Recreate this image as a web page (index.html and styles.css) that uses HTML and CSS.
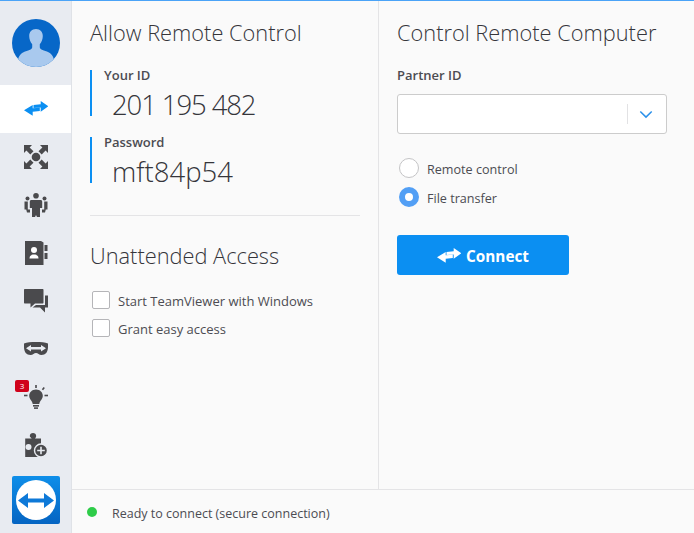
FILE: index.html
```html
<!DOCTYPE html>
<html lang="en">
<head>
<meta charset="utf-8">
<title>TeamViewer</title>
<link rel="stylesheet" href="styles.css">
</head>
<body>
<div class="app">
  <nav class="sidebar">
    <div class="avatar-wrap">
      <svg class="avatar" viewBox="0 0 48 48"><defs><clipPath id="av"><circle cx="24" cy="24" r="24"/></clipPath></defs><circle cx="24" cy="24" r="24" fill="#0767c8"/><g clip-path="url(#av)"><path d="M24 10c-4.300 0-6.800 3-6.800 7 0 3.200 1.200 6.200 3 8.200v3.300c0 1.500-2.500 2.500-5.500 3.500C10 33.500 7 35.500 6 41v7h36v-7c-1-5.500-4-7.500-8.700-9-3-1-5.500-2-5.500-3.500v-3.300c1.800-2 3-5 3-8.200 0-4-2.500-7-6.800-7z" fill="#a9c9ee"/></g></svg>
    </div>
    <a class="nav-item active">
      <svg class="ico" viewBox="0 0 24 24"><path fill="#0b8ff2" d="M16.700 4 24.300 9.300 16.700 14.700V10.400L9.500 11V8L16.700 7.200zM8.700 8V11.300L15.800 10.700V14L8.700 14.700V18.700L0 13.300z"/></svg>
    </a>
    <a class="nav-item">
      <svg class="ico" viewBox="0 0 24 24" fill="#4a4a4d"><circle cx="12" cy="12" r="4.300"/><path d="M0 0h8L5.600 2.400 9.500 6.300 6.300 9.500 2.400 5.600 0 8zM24 0v8l-2.400-2.400-3.900 3.900-3.200-3.200 3.900-3.900L16 0zM0 24v-8l2.400 2.400 3.900-3.900 3.200 3.200-3.900 3.900L8 24zM24 24h-8l2.400-2.400-3.900-3.900 3.200-3.200 3.900 3.900L24 16z"/></svg>
    </a>
    <a class="nav-item">
      <svg class="ico" viewBox="0 0 24 24" fill="#4a4a4d"><circle cx="12" cy="2.800" r="2.800"/><circle cx="3.500" cy="5.500" r="2"/><circle cx="20.500" cy="5.500" r="2"/><path d="M7.500 7h9c1 0 1.700.7 1.700 1.700V15H16v9h-3l-1-2-1 2H8v-9H5.800V8.700C5.800 7.700 6.500 7 7.500 7z"/><path d="M.5 8.500h3.300v8H6v3H3l-.8-3H.5zM23.500 8.500h-3.300v8H18v3h3l.8-3h1.700z"/></svg>
    </a>
    <a class="nav-item">
      <svg class="ico" viewBox="0 0 24 24"><path fill="#4a4a4d" d="M1 0h16l2.500 1.500V24H1z"/><rect x="20.500" y="4" width="3" height="6" fill="#4a4a4d"/><rect x="20.500" y="12" width="3" height="6" fill="#4a4a4d"/><circle cx="10" cy="9" r="3" fill="#fff"/><path fill="#fff" d="M5.500 17.500c0-3 2-4 4.500-4s4.500 1 4.500 4z"/></svg>
    </a>
    <a class="nav-item">
      <svg class="ico" viewBox="0 0 24 24" fill="#4a4a4d"><path d="M1 0h17.500c.6 0 1 .4 1 1v12.500c0 .6-.4 1-1 1H11l-4.500 4v-4H1c-.6 0-1-.4-1-1V1c0-.6.4-1 1-1z"/><path d="M21 6.500h3v12h-3v5l-5-5H8.500l3.500-2.500h9z"/></svg>
    </a>
    <a class="nav-item">
      <svg class="ico" viewBox="0 0 24 24"><path fill="#4a4a4d" d="M0 6.500C3 5.300 7 5 12 5s9 .3 12 1.500v3.500c0 5-2.500 8-6.500 8-2.500 0-3.500-2-5.500-2s-3 2-5.500 2C2.500 18 0 15 0 10z"/><path fill="#e8ebf1" d="M7 8v2h10V8l5 3.200-5 3.300v-2H7v2l-5-3.300z"/></svg>
    </a>
    <a class="nav-item">
      <svg class="ico" viewBox="0 0 24 24"><g fill="#4a4a4d"><path d="M12 4.500c4 0 6.800 3 6.800 6.300 0 3.500-3 5-3.500 8.200H8.700c-.5-3.200-3.500-4.700-3.500-8.200 0-3.300 2.800-6.300 6.800-6.300z"/><rect x="9" y="20" width="6" height="1.600"/><rect x="10" y="22.300" width="4" height="1.600"/><rect x="11.200" y="0" width="1.600" height="3"/><rect x="0" y="9.700" width="3.500" height="1.600"/><rect x="20.500" y="9.700" width="3.500" height="1.600"/><path d="m17.800 4.200 1.800-2.300 1.300 1-1.800 2.300z"/></g></svg>
      <span class="badge">3</span>
    </a>
    <a class="nav-item">
      <svg class="ico" viewBox="0 0 24 24"><path fill="#4a4a4d" d="M9 0c1.800 0 3.200 1.300 3.200 3 0 1-.4 1.700-1.200 2.500h6V24H1.200V5.500h6.600C7 4.700 5.800 4 5.800 3 5.800 1.300 7.200 0 9 0z"/><circle cx="4.500" cy="14" r="3" fill="#e8ebf1"/><circle cx="17" cy="17.500" r="6.500" fill="#4a4a4d" stroke="#e8ebf1" stroke-width="1.400"/><path fill="#e8ebf1" d="M16.200 13.800h1.600v3h3v1.500h-3v3h-1.600v-3h-3v-1.500h3z"/></svg>
    </a>
    <div class="logo-wrap">
      <svg class="logo" viewBox="0 0 48 48"><defs><linearGradient id="lg" x1="0" y1="0" x2="0" y2="1"><stop offset="0" stop-color="#0e8ee9"/><stop offset="1" stop-color="#0564c2"/></linearGradient></defs><rect width="48" height="48" rx="2" fill="url(#lg)"/><circle cx="24" cy="24" r="20" fill="#fff"/><path fill="#0e79d8" d="M6 24.500 16 17v5.500h16V17l10 7.500L32 32v-5.500H16V32z"/></svg>
    </div>
  </nav>
  <div class="main">
    <div class="columns">
      <section class="col col-left">
        <h1 class="title">Allow Remote Control</h1>
        <div class="cred">
          <div class="cred-label">Your ID</div>
          <div class="cred-value id">201 195 482</div>
        </div>
        <div class="cred">
          <div class="cred-label">Password</div>
          <div class="cred-value">mft84p54</div>
        </div>
        <hr class="rule">
        <h1 class="title">Unattended Access</h1>
        <div class="checks">
          <label class="check"><span class="box"></span><span class="opt-text">Start TeamViewer with Windows</span></label>
          <label class="check"><span class="box"></span><span class="opt-text">Grant easy access</span></label>
        </div>
      </section>
      <section class="col col-right">
        <h1 class="title">Control Remote Computer</h1>
        <div class="cred-label partner">Partner ID</div>
        <div class="combo">
          <span class="combo-sep"></span>
          <svg class="chev" viewBox="0 0 16 10"><path d="M1.500 1.500 8 8l6.500-6.500" fill="none" stroke="#2a90ea" stroke-width="1.700"/></svg>
        </div>
        <div class="radios">
          <label class="radio"><span class="dot"></span><span class="opt-text">Remote control</span></label>
          <label class="radio"><span class="dot on"></span><span class="opt-text">File transfer</span></label>
        </div>
        <button class="connect">
          <svg class="connect-ico" viewBox="0 3 24 17"><path fill="#fff" d="M16.700 4 24.300 9.300 16.700 14.700V10.400L9.500 11V8L16.700 7.200zM8.700 8V11.300L15.800 10.700V14L8.700 14.700V18.700L0 13.300z"/></svg>
          Connect
        </button>
      </section>
    </div>
    <footer class="status"><span class="led"></span>Ready to connect (secure connection)</footer>
  </div>
</div>
</body>
</html>
```
FILE: styles.css
```css
* { box-sizing: border-box; }
html, body { margin: 0; height: 100%; }
body { font-family: "Open Sans", "Noto Sans", sans-serif; color: #3f3f44; background: #fafafa; overflow: hidden; }
.app { display: flex; width: 694px; height: 533px; border-top: 1px solid #4aa3f7; }
.sidebar { width: 72px; flex: none; background: #e8ebf1; border-right: 1px solid #dfe2e7; display: flex; flex-direction: column; }
.avatar-wrap { height: 84px; padding: 18px 0 0 12px; }
.avatar { display: block; width: 48px; height: 48px; }
.nav-item { position: relative; height: 48px; display: flex; align-items: center; justify-content: center; }
.nav-item.active { background: #fff; }
.ico { display: block; width: 24px; height: 24px; }
.badge { position: absolute; left: 15px; top: 7px; width: 14px; height: 12px; border-radius: 2px; background: #d0021b; color: #fff; font-size: 8px; line-height: 12px; text-align: center; }
.logo-wrap { padding: 7px 0 0 12px; }
.logo { display: block; width: 48px; height: 48px; }
.main { flex: 1; display: flex; flex-direction: column; min-width: 0; }
.columns { display: flex; flex: 1; min-height: 0; }
.col { padding-top: 17px; }
.col-left { width: 307px; border-right: 1px solid #e4e4e6; padding-left: 18px; padding-right: 18px; }
.col-right { flex: 1; padding-left: 18px; padding-right: 27px; }
.title { margin: 0; font-size: 21.800px; font-weight: 300; line-height: 30px; color: #35353a; white-space: nowrap; }
.cred { margin-top: 22px; height: 46px; border-left: 2px solid #0b8ff2; padding-left: 12px; }
.cred + .cred { margin-top: 21px; }
.cred-label { font-size: 13px; font-weight: 600; line-height: 11px; color: #4c4c52; }
.cred-value { font-size: 27.500px; font-weight: 300; line-height: 36px; margin: 6px 0 0 8px; color: #35353a; white-space: nowrap; }
.cred-value.id { letter-spacing: -1.100px; }
.rule { margin: 32px 0 0; border: 0; border-top: 1px solid #e4e4e6; }
.rule + .title { margin-top: 25px; }
.checks { margin-top: 20px; display: flex; flex-direction: column; gap: 10px; }
.check { display: flex; align-items: center; gap: 8px; height: 18px; padding-left: 2px; font-size: 13px; color: #4c4c52; white-space: nowrap; }
.opt-text { padding-top: 2px; }
.box { width: 18px; height: 18px; border: 1px solid #b5b5b8; border-radius: 2px; background: #fff; flex: none; }
.partner { margin-top: 22px; }
.combo { margin-top: 13px; height: 40px; border: 1px solid #ccc; border-radius: 3px; background: #fff; display: flex; align-items: center; justify-content: flex-end; padding-right: 13px; }
.combo-sep { width: 1px; height: 20px; background: #e2e2e4; margin-right: 11px; }
.chev { display: block; width: 14px; height: 9px; }
.radios { margin-top: 24px; display: flex; flex-direction: column; gap: 9px; }
.radio { display: flex; align-items: center; gap: 8px; height: 20px; padding-left: 2px; font-size: 12.600px; color: #4c4c52; white-space: nowrap; }
.dot { width: 20px; height: 20px; border-radius: 50%; border: 1px solid #c4c4c6; background: #fff; flex: none; }
.dot.on { border: 6px solid #529ff5; }
.connect { margin-top: 28px; width: 172px; height: 40px; border: 0; border-radius: 3px; background: #0b8ff2; color: #fff; font-family: inherit; font-size: 15.300px; font-weight: 700; display: flex; align-items: center; justify-content: center; gap: 5px; padding: 2px 0 0; }
.connect-ico { display: block; width: 24px; height: 17px; margin-top: -2px; }
.status { height: 44px; flex: none; border-top: 1px solid #e4e4e6; display: flex; align-items: center; padding: 4px 0 0 15px; font-size: 12.500px; color: #4c4c52; }
.led { width: 10px; height: 10px; border-radius: 50%; background: #2ecc49; margin-right: 15px; flex: none; margin-top: -3px; }
```
